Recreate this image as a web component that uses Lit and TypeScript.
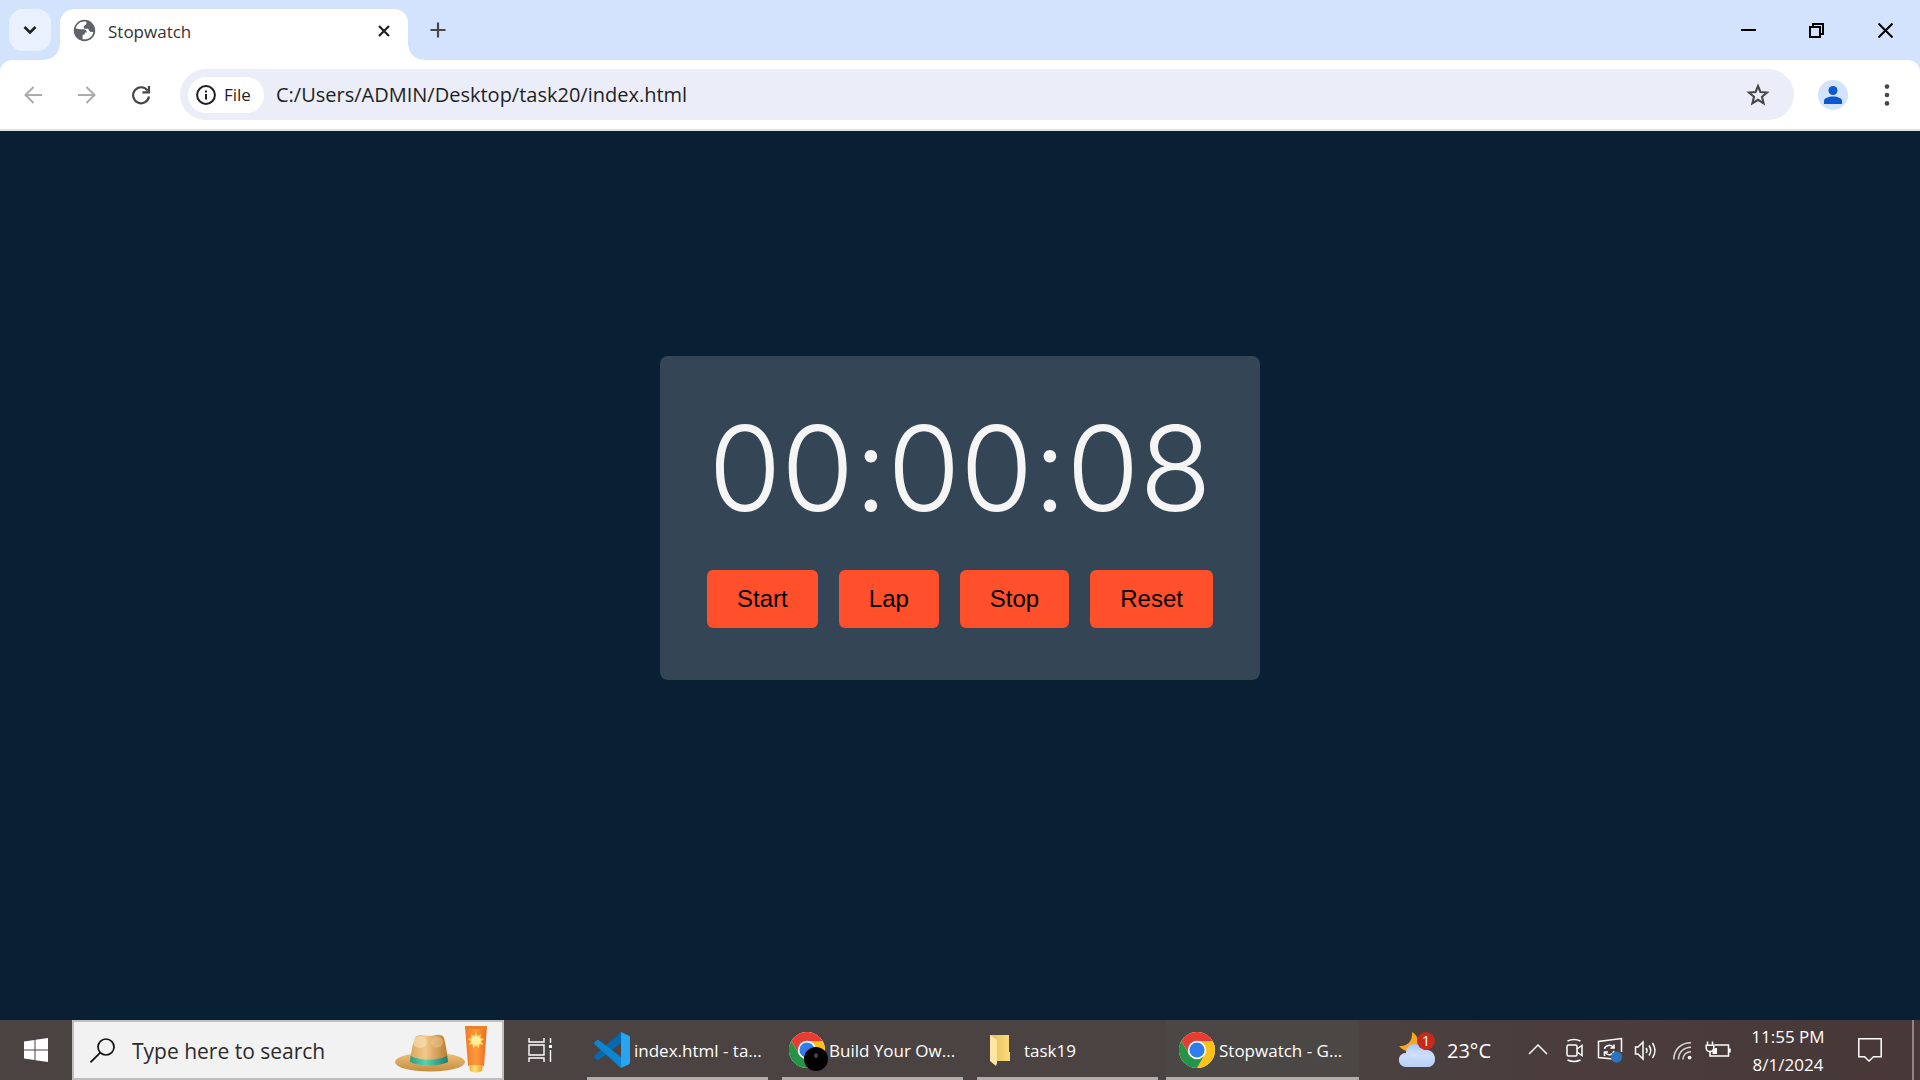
import { LitElement, html, svg, css, TemplateResult } from "lit";
import { customElement, property, state } from "lit/decorators.js";
import { classMap } from "lit/directives/class-map.js";

const CHROME_LOGO = html`<svg width="36" height="36" viewBox="0 0 36 36" aria-hidden="true">
  <circle cx="18" cy="18" r="18" fill="#fff" />
  <path d="M18 9 H33.6 A18 18 0 0 0 2.4 9 L10.2 22.5 Z" fill="#e63c31" />
  <path d="M33.6 9 H18 L25.8 22.5 L18 36 A18 18 0 0 0 33.6 9 Z" fill="#fcc21b" />
  <path d="M2.4 9 A18 18 0 0 0 18 36 L25.8 22.5 H10.2 Z" fill="#259447" />
  <circle cx="18" cy="18" r="9.2" fill="#fff" />
  <circle cx="18" cy="18" r="7.6" fill="#2f7cec" />
</svg>`;

const VSCODE_LOGO = html`<svg width="36" height="36" viewBox="0 0 36 36" aria-hidden="true">
  <path d="M27 0 L0.8 23.6 C0 24.6 0.2 25.6 1 26.3 L2.8 27.8 C3.6 28.4 4.3 28.3 5 27.8 L27 11 Z" fill="#0668ae" />
  <path d="M27 36 L0.8 12.4 C0 11.4 0.2 10.4 1 9.7 L2.8 8.2 C3.6 7.6 4.3 7.7 5 8.2 L27 25 Z" fill="#0c86d0" />
  <path d="M27 0 L34.6 3.6 C35.6 4.1 36 4.8 36 5.8 V30.2 C36 31.2 35.6 31.9 34.6 32.4 L27 36 Z" fill="#27a5f1" />
</svg>`;

const FOLDER = html`<svg width="36" height="36" viewBox="0 0 36 36" aria-hidden="true">
  <defs>
    <linearGradient id="back" x1="0" x2="1"><stop offset="0" stop-color="#e5bd5c" /><stop offset="1" stop-color="#fbdc7c" /></linearGradient>
  </defs>
  <path d="M6 3 H25 V20 H26 V29 H8 Z" fill="url(#back)" />
  <path d="M6 3 L13 8 V31 L12 34 L6 29 Z" fill="#ffe6a4" />
</svg>`;

/** One entry of the taskbar: an icon, a shortened title and the running bar. */
@customElement("task-item")
class TaskItem extends LitElement {
  @property() label = "";
  @property({ type: Boolean }) active = false;
  @property({ type: Boolean }) badge = false;
  @property({ attribute: false }) icon: TemplateResult = FOLDER;

  static styles = css`
    :host { display: flex; flex: 0 1 193px; min-width: 0; }
    .task {
      position: relative; flex: 1; min-width: 0; display: flex; align-items: center; gap: 4px;
      padding: 0 13px; border: 0; background: none; color: #fff;
      font: 17px/24px "Open Sans", "Noto Sans", sans-serif;
    }
    .task::after { content: ""; position: absolute; left: 6px; right: 6px; bottom: 0; height: 3px; background: #b1adac; }
    .active { background: #4b4745; }
    .active::after { left: 0; right: 0; }
    .icon { position: relative; width: 36px; height: 36px; flex: none; }
    .dot { position: absolute; left: 15px; top: 15px; width: 24px; height: 24px; border-radius: 50%; background: #000; }
    .dot::after { content: ""; position: absolute; left: 10px; top: 6px; width: 4px; height: 5px; border-radius: 50%; background: #444; }
    .label { white-space: nowrap; padding-top: 2px; }
  `;

  render() {
    return html`<button class=${classMap({ task: true, active: this.active })}>
      <span class="icon">${this.icon}${this.badge ? html`<span class="dot"></span>` : ""}</span>
      <span class="label">${this.label}</span>
    </button>`;
  }
}

/** The tab strip and the toolbar of the browser window. */
@customElement("browser-header")
class BrowserHeader extends LitElement {
  static styles = css`
    :host { display: block; background: #d3e3fd; font-family: "Open Sans", "Noto Sans", sans-serif; color: #1f1f1f; }
    * { box-sizing: border-box; }
    button { border: 0; padding: 0; background: none; display: grid; place-items: center; flex: none; color: inherit; }
    svg { display: block; }
    .strip { display: flex; height: 60px; align-items: center; }
    .search { width: 42px; height: 42px; margin: 0 9px; border-radius: 14px; background: #e9f1ff; }
    .tab {
      position: relative; align-self: flex-end; width: 348px; height: 51px; padding: 0 12px 8px 13px; display: flex; align-items: center; gap: 12px;
      background: #fff; border-radius: 14px 14px 0 0;
    }
    .tab::before, .tab::after { content: ""; position: absolute; bottom: 0; width: 15px; height: 15px; }
    .tab::before { left: -15px; background: radial-gradient(circle at 0 0, transparent 14px, #fff 15px); }
    .tab::after { right: -15px; background: radial-gradient(circle at 100% 0, transparent 14px, #fff 15px); }
    .title { flex: 1; font-size: 17px; line-height: 24px; padding-top: 2px; color: #333; }
    .close { width: 24px; height: 24px; }
    .new { width: 42px; height: 42px; margin-left: 9px; color: #474747; }
    .window { margin-left: auto; display: flex; align-self: stretch; color: #000; }
    .window button { width: 69px; }
    .window button:first-child { width: 68px; }
    .toolbar {
      display: flex; align-items: center; height: 71px; padding: 0 15px; background: #fff;
      border-bottom: 2px solid #dfe1e1; border-radius: 12px 12px 0 0;
    }
    .nav { display: flex; gap: 18px; color: #474747; }
    .nav button, .menu { width: 36px; height: 36px; }
    .nav button:disabled { color: #ababab; }
    .address { flex: 1; display: flex; align-items: center; height: 51px; margin: 0 24px 0 21px; padding: 0 18px 0 8px; border-radius: 26px; background: #ebeef8; }
    .chip { display: flex; align-items: center; gap: 8px; width: 76px; height: 36px; padding: 0 8px; border-radius: 18px; background: #fff; font: 500 17px/24px "Open Sans", sans-serif; }
    .url { flex: 1; min-width: 0; border: 0; padding: 0; margin: 0 12px; background: none; outline: 0; color: #1f1f1f; font: 20px/27px "Open Sans", "Noto Sans", sans-serif; }
    .avatar { width: 30px; height: 30px; border-radius: 50%; background: #d3e3fd; margin-right: 21px; }
    .menu { color: #474747; }
  `;

  render() {
    return html`
      <div class="strip">
        <button class="search" aria-label="Search tabs">
          <svg width="14" height="10" viewBox="0 0 14 10" fill="none" stroke="#1f1f1f" stroke-width="2.6"><path d="M1.5 2 L7 7.5 L12.5 2" /></svg>
        </button>
        <div class="tab">
          <svg width="23" height="23" viewBox="0 0 24 24" aria-hidden="true">
            <circle cx="12" cy="12" r="11.2" fill="#5f6368" />
            <path fill="#fff" d="M13.8 2.8 C8.600 1.800 4 4.800 2.900 9.800 L7.400 10.600 H10.600 C13.200 10.600 14.600 12 14.400 14.200 H12.400 C12.400 16 11.800 16.800 10 16.800 V21 C15.600 22 20.600 18.600 21.200 13.200 C18.400 14.200 16.200 12.600 16 10.200 H11.800 C10.800 8.400 11.200 7 12.400 6.400 C14 6.200 14.400 4.600 13.800 2.800 Z" />
          </svg>
          <span class="title">Stopwatch</span>
          <button class="close" aria-label="Close tab">
            <svg width="12" height="12" viewBox="0 0 12 12" stroke="#1f1f1f" stroke-width="2.2"><path d="M1 1 L11 11 M11 1 L1 11" /></svg>
          </button>
        </div>
        <button class="new" aria-label="New tab">
          <svg width="16" height="16" viewBox="0 0 16 16" stroke="currentColor" stroke-width="2.2"><path d="M8 0.5 V15.5 M0.5 8 H15.5" /></svg>
        </button>
        <div class="window">
          <button aria-label="Minimize"><svg width="15" height="15" viewBox="0 0 15 15"><rect y="6" width="15" height="2" /></svg></button>
          <button aria-label="Restore">
            <svg width="15" height="15" viewBox="0 0 15 15" fill="none" stroke="#000" stroke-width="2"><path d="M1 4 H11 V14 H1 Z M4 4 V1 H14 V11 H11" /></svg>
          </button>
          <button aria-label="Close"><svg width="15" height="15" viewBox="0 0 15 15" stroke="#000" stroke-width="2"><path d="M0.5 0.5 L14.5 14.5 M14.5 0.5 L0.5 14.5" /></svg></button>
        </div>
      </div>
      <div class="toolbar">
        <div class="nav">
          <button disabled aria-label="Back">
            <svg width="18" height="18" viewBox="0 0 18 18" fill="none" stroke="currentColor" stroke-width="2"><path d="M18 9 H1.5 M9.5 1 L1.5 9 L9.5 17" /></svg>
          </button>
          <button disabled aria-label="Forward">
            <svg width="18" height="18" viewBox="0 0 18 18" fill="none" stroke="currentColor" stroke-width="2"><path d="M0 9 H16.5 M8.5 1 L16.5 9 L8.5 17" /></svg>
          </button>
          <button aria-label="Reload">
            <svg width="20" height="20" viewBox="0 0 20 20" fill="none" stroke="currentColor" stroke-width="2.2"><path d="M16.6 5.6 A8 8 0 1 0 18 11.5 M18 1 V7.4 H11.4" /></svg>
          </button>
        </div>
        <div class="address">
          <button class="chip">
            <svg width="20" height="20" viewBox="0 0 20 20" fill="none" stroke="#1f1f1f" stroke-width="2"><circle cx="10" cy="10" r="8.9" /><path d="M10 9 V14.5 M10 5.4 V7.4" /></svg>
            <span>File</span>
          </button>
          <input class="url" aria-label="Address" value="C:/Users/ADMIN/Desktop/task20/index.html" />
          <button class="menu" aria-label="Bookmark this tab">
            <svg width="24" height="24" viewBox="0 0 24 24" fill="none" stroke="currentColor" stroke-width="2.1"><path d="M12 3 L14.4 9 L21 9.5 L16 13.8 L17.6 20.3 L12 16.8 L6.4 20.3 L8 13.8 L3 9.5 L9.6 9 Z" /></svg>
          </button>
        </div>
        <button class="avatar" aria-label="Profile">
          <svg width="18" height="18" viewBox="0 0 18 18" fill="#0b57d0"><circle cx="9" cy="4.5" r="4.5" /><path d="M0 18 V15 C0 12 4.5 10.4 9 10.4 S18 12 18 15 V18 Z" /></svg>
        </button>
        <button class="menu" aria-label="Menu">
          <svg width="6" height="22" viewBox="0 0 6 22" fill="currentColor"><circle cx="3" cy="2.6" r="2.3" /><circle cx="3" cy="11" r="2.3" /><circle cx="3" cy="19.4" r="2.3" /></svg>
        </button>
      </div>
    `;
  }
}

/** The stopwatch page itself. */
@customElement("stop-watch")
class StopWatch extends LitElement {
  @state() private seconds = 8;
  @state() private laps: string[] = [];
  private timer = 0;

  static styles = css`
    :host { display: flex; align-items: center; justify-content: center; padding-bottom: 116px; background: #091f33; }
    .card { display: flex; flex-direction: column; align-items: center; width: 600px; padding: 40px 0 52px; border-radius: 8px; background: #344655; box-sizing: border-box; }
    .time {
      margin: 0; color: #f5f5f5; font: 300 118px/144px Inter, "Open Sans", sans-serif; white-space: nowrap;
      font-optical-sizing: none; font-feature-settings: "calt" 0;
    }
    .actions { display: flex; gap: 21px; margin-top: 30px; }
    .action { padding: 15px 30px; border: 0; border-radius: 6px; background: #ff4f2b; color: #000; font: 24px/28px "Liberation Sans", Arial, sans-serif; }
    .laps { margin: 12px 0 0; padding: 0; list-style: none; color: #f5f5f5; font: 20px/28px "Liberation Sans", sans-serif; }
  `;

  private get time() {
    const pad = (n: number) => String(n).padStart(2, "0");
    return [Math.floor(this.seconds / 3600), Math.floor(this.seconds / 60) % 60, this.seconds % 60].map(pad).join(":");
  }
  private start() {
    if (!this.timer) this.timer = window.setInterval(() => this.seconds++, 1000);
  }
  private stop() {
    clearInterval(this.timer);
    this.timer = 0;
  }
  private reset() {
    this.stop();
    this.seconds = 0;
    this.laps = [];
  }

  render() {
    return html`<section class="card">
      <h1 class="time">${this.time}</h1>
      <div class="actions">
        <button class="action" @click=${this.start}>Start</button>
        <button class="action" @click=${() => (this.laps = [...this.laps, this.time])}>Lap</button>
        <button class="action" @click=${this.stop}>Stop</button>
        <button class="action" @click=${this.reset}>Reset</button>
      </div>
      ${this.laps.length ? html`<ol class="laps">${this.laps.map((lap) => html`<li>${lap}</li>`)}</ol>` : ""}
    </section>`;
  }
}

const trayIcon = (body: unknown) => html`<svg width="26" height="26" viewBox="0 0 26 26" fill="none" stroke="#fff" stroke-width="1.5">${body}</svg>`;

const TRAY = [
  { name: "Show hidden icons", icon: trayIcon(svg`<path d="M4 17 L13 8 L22 17" />`) },
  { name: "Meet Now", icon: trayIcon(svg`<rect x="6" y="8" width="10" height="11" rx="1.5" /><path d="M16 12 L21 8.5 V18.500 L16 15 M6.500 4 Q13 1 19.500 4 M6.500 23 Q13 26 19.500 23" />`) },
  { name: "Windows Update", icon: trayIcon(svg`<path d="M16 22 L1.500 20.600 V4.500 L24.500 1.500 V15" /><path d="M7.500 12 C8 8 14.500 7 16.500 10.500 M17 7.500 V11 H13.500 M17 14 C16 18.200 10.500 19 8.500 15.500 M7.500 19 V15 H11" /><circle cx="19.500" cy="20" r="5.600" fill="#2b74c0" stroke="none" />`) },
  { name: "Volume", icon: trayIcon(svg`<path d="M2.500 10 H5 L10 5 V22 L5 17 H2.500 Z M13 11 Q15 13.500 13 16 M16 8.500 Q19.500 13.500 16 18.500 M19.500 6 Q24.500 13.500 19.500 21" />`) },
  { name: "Network", icon: trayIcon(svg`<path d="M4.800 22.500 C4.800 12.500 12 5.700 22 5.700 M9.500 22.500 C9.500 15 15 10.200 22 10.200 M14 22.500 C14 17.500 17.500 14.700 22 14.700" stroke-opacity=".8" /><circle cx="20.600" cy="20.600" r="1.900" fill="#fff" stroke="none" />`) },
  { name: "Battery", icon: trayIcon(svg`<path d="M9.500 8 H23.500 V19 H5 V14.500 M25 11.500 V15.500" /><path d="M7.500 17 V14.500 L10 11 H12 V17 Z" fill="#fff" stroke="none" /><path d="M2.500 4.500 V8 M7.500 4.500 V8 M1.200 8.200 H8.800 V11 Q8.500 14.500 5 14.500 T1.200 11 Z" />`) },
];

/** The taskbar with its search box, running tasks and tray. */
@customElement("task-bar")
class TaskBar extends LitElement {
  static styles = css`
    :host { display: flex; height: 60px; background: linear-gradient(90deg, #4a4342 0%, #4a4342 68%, #4a3d3c 82%, #483838 100%); color: #fff; font-family: "Open Sans", "Noto Sans", sans-serif; }
    * { box-sizing: border-box; }
    button { border: 0; padding: 0; background: none; color: inherit; display: grid; place-items: center; flex: none; font-family: inherit; }
    svg { display: block; }
    .start { width: 72px; }
    .search { display: flex; align-items: center; width: 432px; padding: 0 14px 0 16px; gap: 17px; border: 2px solid #bfbfbf; background: #f2f2f2; }
    .query { flex: 1; min-width: 0; border: 0; padding: 2px 0 0; background: none; outline: 0; font: 21px/30px "Open Sans", "Noto Sans", sans-serif; color: #2b2b2b; }
    .query::placeholder { color: #2b2b2b; opacity: 1; }
    .view { width: 72px; }
    .tasks { flex: 1; min-width: 0; display: flex; gap: 2px; margin-left: 5px; }
    .weather { display: flex; align-items: center; gap: 12px; margin-right: 29px; font-size: 20px; line-height: 28px; }
    .degrees { padding-top: 2px; }
    .forecast { position: relative; width: 36px; height: 36px; }
    .alert { position: absolute; right: 0; top: 0; width: 18px; height: 18px; border-radius: 50%; background: #c42b1c; font-size: 14px; line-height: 18px; text-align: center; }
    .tray { display: flex; }
    .tray button { width: 36px; }
    .clock { width: 104px; display: flex; flex-direction: column; align-items: center; justify-content: center; padding-top: 2px; font-size: 17px; line-height: 28px; white-space: nowrap; }
    .notes { width: 60px; }
    .desktop { width: 8px; margin-left: 12px; border-left: 2px solid #8f8584; }
  `;

  render() {
    return html`
      <button class="start" aria-label="Start">
        <svg width="24" height="24" viewBox="0 0 24 24" fill="#fff"><path d="M0 3.500 L10.500 2 V11.400 H0 Z M11.500 1.800 L24 0 V11.400 H11.500 Z M0 12.400 H10.500 V22 L0 20.500 Z M11.500 12.400 H24 V24 L11.500 22.200 Z" /></svg>
      </button>
      <label class="search">
        <svg width="25" height="25" viewBox="0 0 25 25" fill="none" stroke="#111" stroke-width="1.700" aria-hidden="true"><circle cx="16" cy="9" r="8" /><path d="M10.300 14.700 L0.500 24.300" /></svg>
        <input class="query" aria-label="Search" placeholder="Type here to search" />
        <svg width="94" height="50" viewBox="0 0 94 50" aria-hidden="true">
          <defs>
            <linearGradient id="straw" x1="0" x2="1"><stop offset="0" stop-color="#d9a75c" /><stop offset=".4" stop-color="#f0c98a" /><stop offset="1" stop-color="#b97a2e" /></linearGradient>
            <linearGradient id="brim" x1="0" x2="0" y1="0" y2="1"><stop offset="0" stop-color="#edc37e" /><stop offset="1" stop-color="#c68c3c" /></linearGradient>
            <linearGradient id="band" x1="0" x2="1"><stop offset="0" stop-color="#2f9c84" /><stop offset=".4" stop-color="#5bd0b0" /><stop offset="1" stop-color="#1d7d70" /></linearGradient>
            <linearGradient id="tube" x1="0" x2="1"><stop offset="0" stop-color="#ee7a2a" /><stop offset=".5" stop-color="#ff9a3a" /><stop offset="1" stop-color="#ec6a22" /></linearGradient>
            <linearGradient id="cap" x1="0" x2="1"><stop offset="0" stop-color="#f0ae2c" /><stop offset=".4" stop-color="#ffe071" /><stop offset="1" stop-color="#eaa01e" /></linearGradient>
          </defs>
          <ellipse cx="36" cy="37" rx="35" ry="9.500" fill="url(#brim)" />
          <path d="M16 37 C17 28 18 20 21 13 C22 9.500 27 9.500 31 10.500 C34 11 38 11 42 10 C46 9.500 49 10 50 13 C52 20 53 28 54 37 C42 42 28 42 16 37 Z" fill="url(#straw)" />
          <ellipse cx="26" cy="17" rx="7" ry="6" fill="#f8dcae" opacity=".7" />
          <ellipse cx="43" cy="17" rx="6" ry="5.500" fill="#f5d09a" opacity=".4" />
          <path d="M16.500 31 C28 36 42 36 53 31 L54 37 C43 42 27 42 16 37 Z" fill="url(#band)" />
          <path d="M71 1 H93 L90 41 H74 Z" fill="url(#tube)" />
          <path d="M71 1 H93 V4 H71 Z" fill="#e98324" />
          <path d="M82 7 L83.600 11 L87 9.300 L86.400 13 L90.300 14 L87 16.300 L89.300 19.500 L85.600 19.600 L84.800 23.500 L82 20.600 L79.200 23.500 L78.400 19.600 L74.700 19.500 L77 16.300 L73.700 14 L77.600 13 L77 9.300 L80.400 11 Z" fill="#ffd75e" />
          <circle cx="82" cy="15.600" r="4.600" fill="#fff0a0" />
          <path d="M75 40 H89 L88 46 Q82 49 76 46 Z" fill="url(#cap)" />
        </svg>
      </label>
      <button class="view" aria-label="Task View">
        <svg width="24" height="24" viewBox="0 0 24 24" fill="none" stroke="#fff" stroke-width="1.400"><path d="M1 0 V4 H16 V0 M1 7 H16 V17 H1 Z M1 24 V20 H16 V24 M22.500 0 V5 M22.500 12 V24" /><rect x="21" y="7" width="3" height="3" fill="#fff" stroke="none" /></svg>
      </button>
      <div class="tasks">
        <task-item label="index.html - ta..." .icon=${VSCODE_LOGO}></task-item>
        <task-item label="Build Your Ow..." .icon=${CHROME_LOGO} badge></task-item>
        <task-item label="task19" .icon=${FOLDER}></task-item>
        <task-item label="Stopwatch - G..." .icon=${CHROME_LOGO} active></task-item>
      </div>
      <button class="weather">
        <span class="forecast">
          <svg width="36" height="36" viewBox="0 0 36 36" aria-hidden="true">
            <defs><linearGradient id="cloud" x1="0" x2="0" y1="0" y2="1"><stop offset="0" stop-color="#a9c6f5" /><stop offset=".5" stop-color="#d5e3fb" /><stop offset="1" stop-color="#9dbcf0" /></linearGradient></defs>
            <path d="M13 0 C20 4 22 13 15 18 C10 21 4 19 0 14 C8 15 14 9 13 0 Z" fill="#f5a623" />
            <path d="M8 35 C3 35 0 32 0 28 C0 24 3 21 7 21 C7 15 11 12 16 12 C20 12 23 14 25 18 C31 17 36 21 36 27 C36 32 33 35 28 35 Z" fill="url(#cloud)" />
            <path d="M8 35 C3 35 0 32 0 28 C0 24 3 21 7 21 C11 21 14 24 15 27 C18 19 26 17 32 20 C36 23 37 29 34 32 C32 35 30 35 28 35 Z" fill="#c6d9f9" opacity=".7" />
          </svg>
          <span class="alert">1</span>
        </span>
        <span class="degrees">23°C</span>
      </button>
      <div class="tray">${TRAY.map((t) => html`<button aria-label=${t.name}>${t.icon}</button>`)}</div>
      <button class="clock"><span>11:55 PM</span><span>8/1/2024</span></button>
      <button class="notes" aria-label="Notifications">
        <svg width="24" height="24" viewBox="0 0 24 24" fill="none" stroke="#fff" stroke-width="1.500"><path d="M0.800 0.800 H23.200 V18.800 H15.500 L11 23 L6.500 18.800 H0.800 Z" /></svg>
      </button>
      <button class="desktop" aria-label="Show desktop"></button>
    `;
  }
}

@customElement("app-root")
class AppRoot extends LitElement {
  static styles = css`
    :host { display: flex; flex-direction: column; min-height: 100vh; }
    .page { flex: 1; }
  `;

  render() {
    return html`<browser-header></browser-header><stop-watch class="page"></stop-watch><task-bar></task-bar>`;
  }
}
